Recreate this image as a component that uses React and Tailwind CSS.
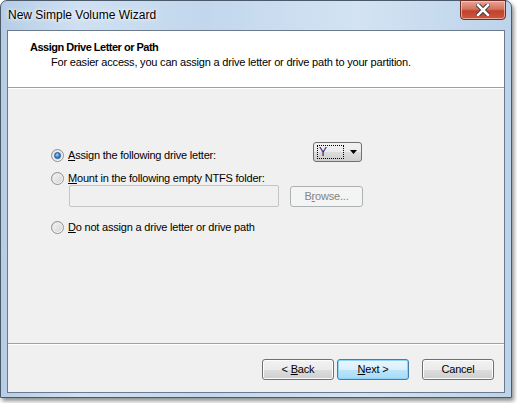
import React from "react";

const font = { fontFamily: '"Liberation Sans", Arial, sans-serif' };

function Radio({ checked }) {
  return (
    <div className="w-[13px] h-[13px] rounded-full border border-[#8e8f8f] bg-gradient-to-br from-[#dcdcdc] to-[#ffffff] flex items-center justify-center shrink-0">
      <div className="w-[9px] h-[9px] rounded-full bg-gradient-to-br from-[#f4f4f4] to-[#d5d5d5] flex items-center justify-center">
        {checked && (
          <div className="w-[7px] h-[7px] rounded-full bg-[radial-gradient(circle_at_40%_35%,#9fd6fb_0%,#3b8ed8_50%,#0f4f8e_100%)] border border-[#17538c]" />
        )}
      </div>
    </div>
  );
}

function Btn({ children, def, disabled, className = "" }) {
  let cls =
    "h-[21px] rounded-[3px] border flex items-center justify-center text-[11px] tracking-[-0.2px] ";
  if (disabled) {
    cls += "border-[#adb2b5] bg-[#f4f4f4] text-[#838383] ";
  } else if (def) {
    cls +=
      "border-[#3c7fb1] bg-[linear-gradient(#eaf6fd_0%,#d9f0fc_50%,#bee6fd_50%,#a7d9f5_100%)] text-black shadow-[inset_0_0_0_1px_#8ed4f8] ";
  } else {
    cls +=
      "border-[#707070] bg-[linear-gradient(#f2f2f2_0%,#ebebeb_50%,#dddddd_50%,#cfcfcf_100%)] text-black shadow-[inset_0_0_0_1px_#fcfcfc] ";
  }
  return (
    <div className={cls + className}>
      <span className="whitespace-pre">{children}</span>
    </div>
  );
}

export default function App() {
  return (
    <div className="w-[517px] h-[403px] bg-white relative overflow-hidden" style={font}>
      <div className="w-[512px] h-[398px] rounded-t-[7px] border border-[#4a5a6a] bg-[linear-gradient(90deg,#b6cde6_0%,#cfe0f2_15%,#c2d7ed_40%,#d3e3f3_70%,#bcd3ea_100%)] shadow-[2px_3px_4px_rgba(0,0,0,0.45)] flex flex-col relative">
        {/* title bar */}
        <div className="h-[29px] flex items-start pl-[7px] pt-[5px]">
          <span className="text-[12px] text-black [text-shadow:0_0_6px_#ffffff,0_0_3px_#ffffff]">
            New Simple Volume Wizard
          </span>
        </div>
        {/* close button */}
        <div className="absolute left-[459px] top-[-1px] w-[46px] h-[20px] rounded-b-[4px] border border-[#6d2f2a] bg-[linear-gradient(#e8a493_0%,#d4735f_45%,#c4402b_55%,#c95a3f_100%)] shadow-[inset_0_0_0_1px_rgba(255,220,210,0.6)] flex items-center justify-center">
          <svg width="14" height="12" viewBox="0 0 14 12">
            <path
              d="M2 1 L12 11 M12 1 L2 11"
              stroke="#3b3b3b"
              strokeWidth="4.5"
              strokeLinecap="square"
            />
            <path
              d="M2 1 L12 11 M12 1 L2 11"
              stroke="#ffffff"
              strokeWidth="2.5"
              strokeLinecap="square"
            />
          </svg>
        </div>
        {/* client */}
        <div className="ml-[6px] w-[498px] h-[363px] border border-[#6a7a8c] bg-[#f0f0f0] flex flex-col">
          <div className="h-[57px] bg-white border-b border-[#a0a0a0] pl-[22px] pt-[9px]">
            <div className="text-[11px] font-bold text-black leading-[15px] tracking-[-0.5px]">
              Assign Drive Letter or Path
            </div>
            <div className="text-[11px] text-black leading-[15px] pl-[21px] tracking-[-0.2px]">
              For easier access, you can assign a drive letter or drive path to your partition.
            </div>
          </div>
          <div className="h-px bg-white" />
          <div className="flex-1 pl-[43px] pt-[53px] text-[11px] tracking-[-0.2px] text-black">
            <div className="flex items-start h-[20px]">
              <div className="flex items-center h-[15px] mt-[6px]">
                <Radio checked />
                <span className="ml-[4px]">
                  <u>A</u>ssign the following drive letter:
                </span>
              </div>
              <div className="ml-auto mr-[142px] w-[49px] h-[20px] rounded-[3px] border border-[#707070] bg-[linear-gradient(#f2f2f2_0%,#ebebeb_50%,#dddddd_50%,#cfcfcf_100%)] flex items-center pl-[3px]">
                <div className="w-[27px] h-[14px] border border-dotted border-black flex items-center pl-[1px] text-[12px] leading-none text-[#1a1a7a]">
                  Y
                </div>
                <svg className="ml-[6px]" width="7" height="4" viewBox="0 0 7 4">
                  <path d="M0 0 H7 L3.5 4 Z" fill="#000" />
                </svg>
              </div>
            </div>
            <div className="flex items-center h-[15px] mt-[9px]">
              <Radio />
              <span className="ml-[4px]">
                <u>M</u>ount in the following empty NTFS folder:
              </span>
            </div>
            <div className="flex items-center -mt-px ml-[18px]">
              <div className="w-[210px] h-[22px] rounded-[2px] border border-[#c5c5c5] bg-[#f0f0f0]" />
              <Btn disabled className="ml-[11px] w-[73px]">
                B<u>r</u>owse...
              </Btn>
            </div>
            <div className="flex items-center h-[15px] mt-[13px]">
              <Radio />
              <span className="ml-[4px]">
                <u>D</u>o not assign a drive letter or drive path
              </span>
            </div>
          </div>
          <div className="h-px bg-[#a0a0a0]" />
          <div className="h-px bg-white" />
          <div className="h-[47px] flex items-start pt-[14px] pl-[254px]">
            <Btn className="w-[72px]">
              {"< "}<u>B</u>ack
            </Btn>
            <Btn def className="ml-[3px] w-[72px]">
              <u>N</u>ext{" >"}
            </Btn>
            <Btn className="ml-[13px] w-[72px]">Cancel</Btn>
          </div>
        </div>
      </div>
    </div>
  );
}
